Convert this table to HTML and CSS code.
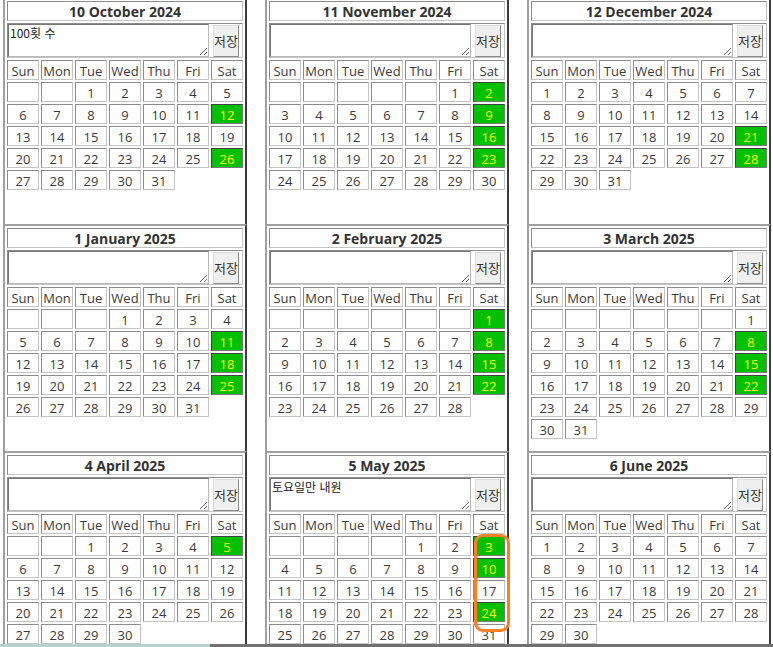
FILE: index.html
```html
<!DOCTYPE html>
<html lang="ko">
<head>
<meta charset="utf-8">
<title>Calendar</title>
<link rel="stylesheet" href="styles.css">
</head>
<body>
<div class="board">

<div class="panel"><div class="cal">
<div class="title">10 October 2024</div>
<div class="memo"><textarea>100횟 수</textarea><button>저장</button></div>
<div class="dn">Sun</div><div class="dn">Mon</div><div class="dn">Tue</div><div class="dn">Wed</div><div class="dn">Thu</div><div class="dn">Fri</div><div class="dn">Sat</div>
<div class="d"></div><div class="d"></div><div class="d">1</div><div class="d">2</div><div class="d">3</div><div class="d">4</div><div class="d">5</div>
<div class="d">6</div><div class="d">7</div><div class="d">8</div><div class="d">9</div><div class="d">10</div><div class="d">11</div><div class="d g">12</div>
<div class="d">13</div><div class="d">14</div><div class="d">15</div><div class="d">16</div><div class="d">17</div><div class="d">18</div><div class="d">19</div>
<div class="d">20</div><div class="d">21</div><div class="d">22</div><div class="d">23</div><div class="d">24</div><div class="d">25</div><div class="d g">26</div>
<div class="d">27</div><div class="d">28</div><div class="d">29</div><div class="d">30</div><div class="d">31</div>
</div></div>

<div class="panel"><div class="cal">
<div class="title">11 November 2024</div>
<div class="memo"><textarea></textarea><button>저장</button></div>
<div class="dn">Sun</div><div class="dn">Mon</div><div class="dn">Tue</div><div class="dn">Wed</div><div class="dn">Thu</div><div class="dn">Fri</div><div class="dn">Sat</div>
<div class="d"></div><div class="d"></div><div class="d"></div><div class="d"></div><div class="d"></div><div class="d">1</div><div class="d g">2</div>
<div class="d">3</div><div class="d">4</div><div class="d">5</div><div class="d">6</div><div class="d">7</div><div class="d">8</div><div class="d g">9</div>
<div class="d">10</div><div class="d">11</div><div class="d">12</div><div class="d">13</div><div class="d">14</div><div class="d">15</div><div class="d g">16</div>
<div class="d">17</div><div class="d">18</div><div class="d">19</div><div class="d">20</div><div class="d">21</div><div class="d">22</div><div class="d g">23</div>
<div class="d">24</div><div class="d">25</div><div class="d">26</div><div class="d">27</div><div class="d">28</div><div class="d">29</div><div class="d">30</div>
</div></div>

<div class="panel"><div class="cal">
<div class="title">12 December 2024</div>
<div class="memo"><textarea></textarea><button>저장</button></div>
<div class="dn">Sun</div><div class="dn">Mon</div><div class="dn">Tue</div><div class="dn">Wed</div><div class="dn">Thu</div><div class="dn">Fri</div><div class="dn">Sat</div>
<div class="d">1</div><div class="d">2</div><div class="d">3</div><div class="d">4</div><div class="d">5</div><div class="d">6</div><div class="d">7</div>
<div class="d">8</div><div class="d">9</div><div class="d">10</div><div class="d">11</div><div class="d">12</div><div class="d">13</div><div class="d">14</div>
<div class="d">15</div><div class="d">16</div><div class="d">17</div><div class="d">18</div><div class="d">19</div><div class="d">20</div><div class="d g">21</div>
<div class="d">22</div><div class="d">23</div><div class="d">24</div><div class="d">25</div><div class="d">26</div><div class="d">27</div><div class="d g">28</div>
<div class="d">29</div><div class="d">30</div><div class="d">31</div>
</div></div>

<div class="panel"><div class="cal">
<div class="title">1 January 2025</div>
<div class="memo"><textarea></textarea><button>저장</button></div>
<div class="dn">Sun</div><div class="dn">Mon</div><div class="dn">Tue</div><div class="dn">Wed</div><div class="dn">Thu</div><div class="dn">Fri</div><div class="dn">Sat</div>
<div class="d"></div><div class="d"></div><div class="d"></div><div class="d">1</div><div class="d">2</div><div class="d">3</div><div class="d">4</div>
<div class="d">5</div><div class="d">6</div><div class="d">7</div><div class="d">8</div><div class="d">9</div><div class="d">10</div><div class="d g">11</div>
<div class="d">12</div><div class="d">13</div><div class="d">14</div><div class="d">15</div><div class="d">16</div><div class="d">17</div><div class="d g">18</div>
<div class="d">19</div><div class="d">20</div><div class="d">21</div><div class="d">22</div><div class="d">23</div><div class="d">24</div><div class="d g">25</div>
<div class="d">26</div><div class="d">27</div><div class="d">28</div><div class="d">29</div><div class="d">30</div><div class="d">31</div>
</div></div>

<div class="panel"><div class="cal">
<div class="title">2 February 2025</div>
<div class="memo"><textarea></textarea><button>저장</button></div>
<div class="dn">Sun</div><div class="dn">Mon</div><div class="dn">Tue</div><div class="dn">Wed</div><div class="dn">Thu</div><div class="dn">Fri</div><div class="dn">Sat</div>
<div class="d"></div><div class="d"></div><div class="d"></div><div class="d"></div><div class="d"></div><div class="d"></div><div class="d g">1</div>
<div class="d">2</div><div class="d">3</div><div class="d">4</div><div class="d">5</div><div class="d">6</div><div class="d">7</div><div class="d g">8</div>
<div class="d">9</div><div class="d">10</div><div class="d">11</div><div class="d">12</div><div class="d">13</div><div class="d">14</div><div class="d g">15</div>
<div class="d">16</div><div class="d">17</div><div class="d">18</div><div class="d">19</div><div class="d">20</div><div class="d">21</div><div class="d g">22</div>
<div class="d">23</div><div class="d">24</div><div class="d">25</div><div class="d">26</div><div class="d">27</div><div class="d">28</div>
</div></div>

<div class="panel"><div class="cal">
<div class="title">3 March 2025</div>
<div class="memo"><textarea></textarea><button>저장</button></div>
<div class="dn">Sun</div><div class="dn">Mon</div><div class="dn">Tue</div><div class="dn">Wed</div><div class="dn">Thu</div><div class="dn">Fri</div><div class="dn">Sat</div>
<div class="d"></div><div class="d"></div><div class="d"></div><div class="d"></div><div class="d"></div><div class="d"></div><div class="d">1</div>
<div class="d">2</div><div class="d">3</div><div class="d">4</div><div class="d">5</div><div class="d">6</div><div class="d">7</div><div class="d g">8</div>
<div class="d">9</div><div class="d">10</div><div class="d">11</div><div class="d">12</div><div class="d">13</div><div class="d">14</div><div class="d g">15</div>
<div class="d">16</div><div class="d">17</div><div class="d">18</div><div class="d">19</div><div class="d">20</div><div class="d">21</div><div class="d g">22</div>
<div class="d">23</div><div class="d">24</div><div class="d">25</div><div class="d">26</div><div class="d">27</div><div class="d">28</div><div class="d">29</div>
<div class="d">30</div><div class="d">31</div>
</div></div>

<div class="panel"><div class="cal">
<div class="title">4 April 2025</div>
<div class="memo"><textarea></textarea><button>저장</button></div>
<div class="dn">Sun</div><div class="dn">Mon</div><div class="dn">Tue</div><div class="dn">Wed</div><div class="dn">Thu</div><div class="dn">Fri</div><div class="dn">Sat</div>
<div class="d"></div><div class="d"></div><div class="d">1</div><div class="d">2</div><div class="d">3</div><div class="d">4</div><div class="d g">5</div>
<div class="d">6</div><div class="d">7</div><div class="d">8</div><div class="d">9</div><div class="d">10</div><div class="d">11</div><div class="d">12</div>
<div class="d">13</div><div class="d">14</div><div class="d">15</div><div class="d">16</div><div class="d">17</div><div class="d">18</div><div class="d">19</div>
<div class="d">20</div><div class="d">21</div><div class="d">22</div><div class="d">23</div><div class="d">24</div><div class="d">25</div><div class="d">26</div>
<div class="d">27</div><div class="d">28</div><div class="d">29</div><div class="d">30</div>
</div></div>

<div class="panel marked"><div class="cal">
<div class="title">5 May 2025</div>
<div class="memo"><textarea>토요일만 내원</textarea><button>저장</button></div>
<div class="dn">Sun</div><div class="dn">Mon</div><div class="dn">Tue</div><div class="dn">Wed</div><div class="dn">Thu</div><div class="dn">Fri</div><div class="dn">Sat</div>
<div class="d"></div><div class="d"></div><div class="d"></div><div class="d"></div><div class="d">1</div><div class="d">2</div><div class="d g">3</div>
<div class="d">4</div><div class="d">5</div><div class="d">6</div><div class="d">7</div><div class="d">8</div><div class="d">9</div><div class="d g">10</div>
<div class="d">11</div><div class="d">12</div><div class="d">13</div><div class="d">14</div><div class="d">15</div><div class="d">16</div><div class="d">17</div>
<div class="d">18</div><div class="d">19</div><div class="d">20</div><div class="d">21</div><div class="d">22</div><div class="d">23</div><div class="d g">24</div>
<div class="d">25</div><div class="d">26</div><div class="d">27</div><div class="d">28</div><div class="d">29</div><div class="d">30</div><div class="d">31</div>
</div><div class="ring"></div></div>

<div class="panel"><div class="cal">
<div class="title">6 June 2025</div>
<div class="memo"><textarea></textarea><button>저장</button></div>
<div class="dn">Sun</div><div class="dn">Mon</div><div class="dn">Tue</div><div class="dn">Wed</div><div class="dn">Thu</div><div class="dn">Fri</div><div class="dn">Sat</div>
<div class="d">1</div><div class="d">2</div><div class="d">3</div><div class="d">4</div><div class="d">5</div><div class="d">6</div><div class="d">7</div>
<div class="d">8</div><div class="d">9</div><div class="d">10</div><div class="d">11</div><div class="d">12</div><div class="d">13</div><div class="d">14</div>
<div class="d">15</div><div class="d">16</div><div class="d">17</div><div class="d">18</div><div class="d">19</div><div class="d">20</div><div class="d">21</div>
<div class="d">22</div><div class="d">23</div><div class="d">24</div><div class="d">25</div><div class="d">26</div><div class="d">27</div><div class="d">28</div>
<div class="d">29</div><div class="d">30</div>
</div></div>

</div>
<div class="statusbar"><div class="status-left"></div><div class="status-right"></div></div>
</body>
</html>
```

FILE: styles.css
```css
* { box-sizing: border-box; }
html, body { overflow: hidden; }
body {
  margin: 0 0 0 3px;
  background: #ffffff;
  font-family: "Open Sans", "Noto Sans CJK KR", sans-serif;
  color: #333333;
}
.board {
  margin-top: -3px;
  display: grid;
  grid-template-columns: repeat(3, 244px);
  column-gap: 18px;
}
.panel {
  height: 227px;
  border-top: 2px solid #a0a0a0;
  border-left: 2px solid #a0a0a0;
  border-right: 2px solid #3c3c3c;
  background: #ffffff;
}
.marked { position: relative; }
.cal {
  display: grid;
  grid-template-columns: repeat(7, 32px);
  grid-template-rows: 20px 35px;
  grid-auto-rows: 20px;
  gap: 2px;
  padding: 2px;
}
.title, .dn, .d, .memo {
  border: 1px solid;
  border-color: #8c8c8c #c4c4c4 #c4c4c4 #8c8c8c;
}
.title {
  grid-column: 1 / -1;
  text-align: center;
  font-weight: 700;
  font-size: 14px;
  line-height: 18px;
  padding-top: 1px;
  color: #333333;
}
.memo {
  grid-column: 1 / -1;
  display: flex;
  align-items: center;
  gap: 4px;
}
.memo textarea {
  width: 201px;
  margin: 0;
  padding: 1px;
  border: 1px solid;
  border-color: #767676 #b8b8b8 #b8b8b8 #767676;
  font-family: "Noto Sans CJK KR", sans-serif;
  font-size: 12px;
  line-height: 14px;
  color: #222222;
  align-self: stretch;
}
.memo button {
  width: 26px;
  height: 32px;
  margin: 0;
  padding: 0;
  background: #efefef;
  border: 1px solid;
  border-color: #dcdcdc #8a8a8a #8a8a8a #dcdcdc;
  border-radius: 0;
  font-family: "Noto Sans CJK KR", sans-serif;
  font-size: 13px;
  color: #333333;
}
.dn, .d {
  text-align: center;
  font-size: 13px;
  line-height: 18px;
  padding-top: 1px;
  color: #3a3a3a;
}
.d.g {
  background: #00c000;
  color: #ffff00;
  border-color: #404040 #7a7a7a #7a7a7a #404040;
}
.ring {
  position: absolute;
  left: 207px;
  top: 81px;
  width: 36px;
  height: 98px;
  border: 3px solid #ff7f27;
  border-radius: 9px;
}
.statusbar {
  position: fixed;
  left: 0;
  right: 0;
  bottom: 0;
  height: 3px;
  display: flex;
}
.status-left { width: 210px; background: #b9d0d0; }
.status-right { flex: 1; background: #707070; }
```
